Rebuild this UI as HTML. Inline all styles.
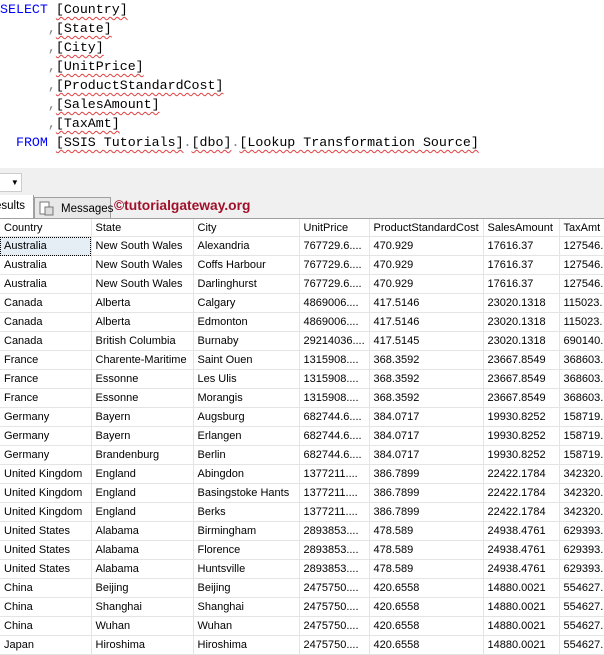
<!DOCTYPE html>
<html><head><meta charset="utf-8"><style>
body{margin:0;width:604px;height:653px;overflow:hidden;background:#fff;position:relative;font-family:"Liberation Sans",sans-serif}
.sql{position:absolute;left:0;top:0;font-family:"Liberation Mono",monospace;font-size:13.3px;line-height:19px;white-space:pre;color:#000}
.k{color:#0000ff}.g{color:#808080}
.w{text-decoration:underline wavy #e04040;text-decoration-thickness:1px;text-underline-offset:3px}
.bar{position:absolute;left:0;top:168px;width:604px;height:27px;background:#f0f0f0}
.dd{position:absolute;left:0;top:173px;width:21px;height:17px;background:#fff;border:1px solid #ccc;border-left:none;font-size:8px;text-align:right;line-height:17px}
.tabs{position:absolute;left:0;top:195px;width:604px;height:23px;background:#f0f0f0;border-bottom:1px solid #a0a0a0}
.t1{position:absolute;left:0;top:0;width:33px;height:23px;background:#fff;border-right:1px solid #a0a0a0;font-size:11.5px;line-height:23px;text-indent:-5px;overflow:hidden}
.t2{position:absolute;left:34px;top:2px;width:75px;height:20px;background:#e8e8e8;border:1px solid #a0a0a0;font-size:11.5px;line-height:22px}
.t2 span{position:absolute;left:26px}
.logo{position:absolute;left:114px;top:198px;font-size:13.8px;font-weight:bold;color:#a0102a}
table{position:absolute;left:0;top:219px;border-collapse:collapse;font-size:11px;table-layout:fixed;width:619px}
td{height:18px;padding:0 0 0 4px;border-right:1px solid #e4e4e4;border-bottom:1px solid #e4e4e4;white-space:nowrap;overflow:hidden;color:#000}
tr.h td{height:17px}
.sel{background:#e6eef5;outline:1px dotted #000;outline-offset:-1px}
</style></head><body>
<div class="sql"><span class="k">SELECT</span> <span class="w">[Country]</span>
      <span class="g">,</span><span class="w">[State]</span>
      <span class="g">,</span><span class="w">[City]</span>
      <span class="g">,</span><span class="w">[UnitPrice]</span>
      <span class="g">,</span><span class="w">[ProductStandardCost]</span>
      <span class="g">,</span><span class="w">[SalesAmount]</span>
      <span class="g">,</span><span class="w">[TaxAmt]</span>
  <span class="k">FROM</span> <span class="w">[SSIS Tutorials]</span><span class="g">.</span><span class="w">[dbo]</span><span class="g">.</span><span class="w">[Lookup Transformation Source]</span></div>
<div class="bar"></div><div class="dd">▼&nbsp;</div>
<div class="tabs"><div class="t1">esults</div><div class="t2"><svg style="position:absolute;left:4px;top:2px" width="16" height="16"><rect x="1" y="2" width="9" height="12" fill="#fff" stroke="#777"/><rect x="6" y="7" width="8" height="8" fill="#ddd" stroke="#777"/></svg><span>Messages</span></div></div>
<div class="logo">©tutorialgateway.org</div>
<table>
<colgroup><col style="width:91px"><col style="width:102px"><col style="width:106px"><col style="width:70px"><col style="width:114px"><col style="width:76px"><col style="width:60px"></colgroup>
<tr class="h"><td>Country</td><td>State</td><td>City</td><td>UnitPrice</td><td>ProductStandardCost</td><td>SalesAmount</td><td>TaxAmt</td></tr>
<tr><td class="sel">Australia</td><td>New South Wales</td><td>Alexandria</td><td>767729.6....</td><td>470.929</td><td>17616.37</td><td>127546.</td></tr>
<tr><td>Australia</td><td>New South Wales</td><td>Coffs Harbour</td><td>767729.6....</td><td>470.929</td><td>17616.37</td><td>127546.</td></tr>
<tr><td>Australia</td><td>New South Wales</td><td>Darlinghurst</td><td>767729.6....</td><td>470.929</td><td>17616.37</td><td>127546.</td></tr>
<tr><td>Canada</td><td>Alberta</td><td>Calgary</td><td>4869006....</td><td>417.5146</td><td>23020.1318</td><td>115023.</td></tr>
<tr><td>Canada</td><td>Alberta</td><td>Edmonton</td><td>4869006....</td><td>417.5146</td><td>23020.1318</td><td>115023.</td></tr>
<tr><td>Canada</td><td>British Columbia</td><td>Burnaby</td><td>29214036....</td><td>417.5145</td><td>23020.1318</td><td>690140.</td></tr>
<tr><td>France</td><td>Charente-Maritime</td><td>Saint Ouen</td><td>1315908....</td><td>368.3592</td><td>23667.8549</td><td>368603.</td></tr>
<tr><td>France</td><td>Essonne</td><td>Les Ulis</td><td>1315908....</td><td>368.3592</td><td>23667.8549</td><td>368603.</td></tr>
<tr><td>France</td><td>Essonne</td><td>Morangis</td><td>1315908....</td><td>368.3592</td><td>23667.8549</td><td>368603.</td></tr>
<tr><td>Germany</td><td>Bayern</td><td>Augsburg</td><td>682744.6....</td><td>384.0717</td><td>19930.8252</td><td>158719.</td></tr>
<tr><td>Germany</td><td>Bayern</td><td>Erlangen</td><td>682744.6....</td><td>384.0717</td><td>19930.8252</td><td>158719.</td></tr>
<tr><td>Germany</td><td>Brandenburg</td><td>Berlin</td><td>682744.6....</td><td>384.0717</td><td>19930.8252</td><td>158719.</td></tr>
<tr><td>United Kingdom</td><td>England</td><td>Abingdon</td><td>1377211....</td><td>386.7899</td><td>22422.1784</td><td>342320.</td></tr>
<tr><td>United Kingdom</td><td>England</td><td>Basingstoke Hants</td><td>1377211....</td><td>386.7899</td><td>22422.1784</td><td>342320.</td></tr>
<tr><td>United Kingdom</td><td>England</td><td>Berks</td><td>1377211....</td><td>386.7899</td><td>22422.1784</td><td>342320.</td></tr>
<tr><td>United States</td><td>Alabama</td><td>Birmingham</td><td>2893853....</td><td>478.589</td><td>24938.4761</td><td>629393.</td></tr>
<tr><td>United States</td><td>Alabama</td><td>Florence</td><td>2893853....</td><td>478.589</td><td>24938.4761</td><td>629393.</td></tr>
<tr><td>United States</td><td>Alabama</td><td>Huntsville</td><td>2893853....</td><td>478.589</td><td>24938.4761</td><td>629393.</td></tr>
<tr><td>China</td><td>Beijing</td><td>Beijing</td><td>2475750....</td><td>420.6558</td><td>14880.0021</td><td>554627.</td></tr>
<tr><td>China</td><td>Shanghai</td><td>Shanghai</td><td>2475750....</td><td>420.6558</td><td>14880.0021</td><td>554627.</td></tr>
<tr><td>China</td><td>Wuhan</td><td>Wuhan</td><td>2475750....</td><td>420.6558</td><td>14880.0021</td><td>554627.</td></tr>
<tr><td>Japan</td><td>Hiroshima</td><td>Hiroshima</td><td>2475750....</td><td>420.6558</td><td>14880.0021</td><td>554627.</td></tr>
</table>
</body></html>
